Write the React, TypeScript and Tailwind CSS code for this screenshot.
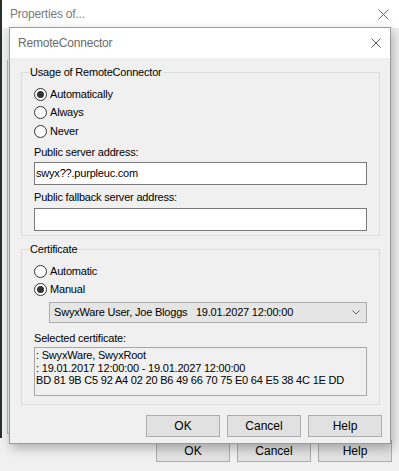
import React from "react";

function CloseIcon({ size, color }: { size: number; color: string }) {
    return (
        <svg width={size} height={size} viewBox={`0 0 ${size} ${size}`} fill="none">
            <path d={`M0.5 0.5 L${size - 0.5} ${size - 0.5} M${size - 0.5} 0.5 L0.5 ${size - 0.5}`} stroke={color} strokeWidth="1" />
        </svg>
    );
}

function Radio({ label, checked }: { label: string; checked?: boolean }) {
    return (
        <div className="flex items-center h-[18.5px]">
            <div className="w-[13px] h-[13px] rounded-full border border-[#333333] bg-white flex items-center justify-center">
                {checked ? <div className="w-[7px] h-[7px] rounded-full bg-[#333333]" /> : null}
            </div>
            <span className="ml-[3px] leading-[15px]">{label}</span>
        </div>
    );
}

function Button({ label }: { label: string }) {
    return (
        <div className="w-[74px] h-[22px] flex items-center justify-center bg-[#e1e1e1] border border-[#adadad] text-[12px] tracking-normal">
            {label}
        </div>
    );
}

export default function App() {
    return (
        <div className="relative w-[399px] h-[471px] overflow-hidden bg-[#f0f0f0] text-[11px] tracking-[-0.2px] leading-[15px] text-black font-['Liberation_Sans',Arial,sans-serif]">
            {/* window behind */}
            <div className="flex flex-col h-full">
                <div className="h-[28px] bg-white flex items-center justify-between pl-[8px] pr-[10px] border-l-2 border-[#2a302a]">
                    <span className="text-[12px] text-[#7b7b7b]">Properties of...</span>
                    <CloseIcon size={11} color="#6a6a6a" />
                </div>
                <div className="flex-1 flex">
                    <div className="w-[2px] h-[410px] bg-[#2a302a]" />
                    <div className="ml-[5px] mt-[32px] w-[10px] h-[374px] border-l border-b border-[#b5b5b5]" />
                </div>
                <div className="flex justify-end gap-[7px] pr-[7px] pb-[9px]">
                    <Button label="OK" />
                    <Button label="Cancel" />
                    <Button label="Help" />
                </div>
            </div>

            {/* RemoteConnector dialog */}
            <div className="absolute left-[9px] top-[27px] w-[382px] h-[417px] flex flex-col bg-[#f0f0f0] border border-[#9b9b9b] shadow-[2px_4px_10px_rgba(0,0,0,0.28)]">
                <div className="h-[30px] shrink-0 bg-white flex items-center justify-between pl-[8px] pr-[9px]">
                    <span className="text-[12px] text-[#6b6b6b]">RemoteConnector</span>
                    <CloseIcon size={10} color="#5a5a5a" />
                </div>

                <div className="flex flex-col pl-[11px] pr-[10px] pt-[7px]">
                    <fieldset className="border border-[#dcdcdc] pl-[12px] pr-[12px] pb-[4px]">
                        <legend className="-ml-[5px] px-[1px] leading-[15px]">Usage of RemoteConnector</legend>
                        <div className="pt-[5px]">
                            <Radio label="Automatically" checked />
                            <Radio label="Always" />
                            <Radio label="Never" />
                        </div>
                        <div className="mt-[4px]">Public server address:</div>
                        <div className="mt-[2.5px] h-[23px] bg-white border border-[#7a7a7a] flex items-center pl-[1px]">
                            swyx??.purpleuc.com
                        </div>
                        <div className="mt-[5px]">Public fallback server address:</div>
                        <div className="mt-[3px] h-[23px] bg-white border border-[#7a7a7a]" />
                    </fieldset>

                    <fieldset className="mt-[6px] border border-[#dcdcdc] pl-[12px] pr-[12px] pb-[8px]">
                        <legend className="-ml-[5px] px-[1px] leading-[15px]">Certificate</legend>
                        <div className="pt-[5px]">
                            <Radio label="Automatic" />
                            <Radio label="Manual" checked />
                        </div>
                        <div className="mt-[3px] ml-[15px] h-[21px] bg-[#e5e5e5] border border-[#adadad] flex items-center justify-between pl-[4px] pr-[6px]">
                            <span className="whitespace-pre">SwyxWare User, Joe Bloggs   19.01.2027 12:00:00</span>
                            <svg width="8" height="5" viewBox="0 0 8 5" fill="none">
                                <path d="M0.5 0.5 L4 4 L7.5 0.5" stroke="#606060" strokeWidth="1" />
                            </svg>
                        </div>
                        <div className="mt-[8px]">Selected certificate:</div>
                        <div className="mt-[1px] h-[49px] border border-[#a8a8a8] bg-[#f0f0f0] pl-[1px] pt-[1px] leading-[12.5px] whitespace-nowrap">
                            <div>: SwyxWare, SwyxRoot</div>
                            <div>: 19.01.2017 12:00:00 - 19.01.2027 12:00:00</div>
                            <div>BD 81 9B C5 92 A4 02 20 B6 49 66 70 75 E0 64 E5 38 4C 1E DD</div>
                        </div>
                    </fieldset>

                    <div className="mt-[10px] -mr-[2px] flex justify-end gap-[7px]">
                        <Button label="OK" />
                        <Button label="Cancel" />
                        <Button label="Help" />
                    </div>
                </div>
            </div>
        </div>
    );
}
